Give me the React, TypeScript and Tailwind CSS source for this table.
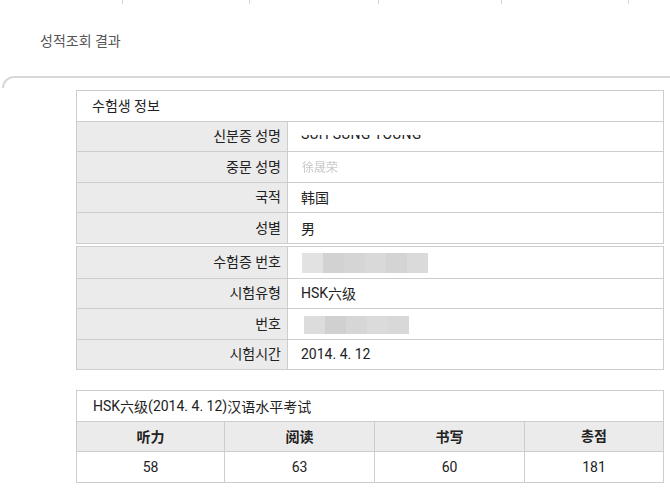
import React from "react";

const font = { fontFamily: "Roboto, 'Noto Sans CJK KR', sans-serif" };
const sc = { fontFamily: "'Noto Sans CJK SC', sans-serif" };

function Mosaic({ shades, h }: { shades: string[]; h: string }) {
  return (
    <div className={`flex ${h}`}>
      {shades.map((c, i) => (
        <div key={i} className="w-[21px]" style={{ background: c }} />
      ))}
    </div>
  );
}

function Row({
  label,
  h,
  children,
}: {
  label: string;
  h: string;
  children?: React.ReactNode;
}) {
  return (
    <div className={`flex border-b border-[#cdcdcd] ${h}`}>
      <div className="w-[211px] shrink-0 bg-[#ebebeb] border-r border-[#cdcdcd] flex items-center justify-end pr-[6px] text-[14px] text-[#222]">
        {label}
      </div>
      <div className="flex-1 flex items-center pl-[13px] text-[14px] text-[#222]">
        {children}
      </div>
    </div>
  );
}

export default function App() {
  return (
    <div className="w-[670px] h-[496px] bg-white overflow-hidden" style={font}>
      {/* tab bar bottom ticks */}
      <div className="flex h-[4px]">
        <div className="ml-[122px] w-px bg-[#d6d6d6]" />
        <div className="ml-[126px] w-px bg-[#d6d6d6]" />
        <div className="ml-[128px] w-px bg-[#d6d6d6]" />
        <div className="ml-[122px] w-px bg-[#d6d6d6]" />
        <div className="ml-[126px] w-px bg-[#d6d6d6]" />
      </div>

      <div className="pl-[40px] pt-[27px] h-[72px] text-[14px] text-[#555]">
        성적조회 결과
      </div>

      <div className="ml-[2px] h-[12px] border-t-2 border-l-2 border-[#d8d8d8] rounded-tl-[12px] border-b-0 border-r-0" />

      <div className="pl-[76px] pt-[2px]">
        <div className="w-[588px] border border-[#cdcdcd] border-b-0">
          <div className="h-[31px] border-b border-[#cdcdcd] flex items-center pl-[15px] text-[14px] text-[#222]">
            수험생 정보
          </div>
          <Row label="신분증 성명" h="h-[30px]">
            <div className="h-[7px] overflow-hidden mt-[3px]">
              <div className="-mt-[8px] text-[14px] leading-[15px] tracking-[0.2px]">
                SUH SUNG YOUNG
              </div>
            </div>
          </Row>
          <Row label="중문 성명" h="h-[31px]">
            <span className="text-[12px] text-[#c8c8c8] blur-[0.7px] ml-[1px]" style={sc}>
              徐晟荣
            </span>
          </Row>
          <Row label="국적" h="h-[30px]">
            <span style={sc}>韩国</span>
          </Row>
          <Row label="성별" h="h-[31px]">
            <span style={sc}>男</span>
          </Row>
        </div>

        <div className="w-[588px] border border-[#cdcdcd] border-b-0 mt-[2px]">
          <Row label="수험증 번호" h="h-[32px]">
            <Mosaic
              h="h-[20px] ml-[1px] mt-[1px]"
              shades={["#e2e2e2", "#d2d2d2", "#d5d5d5", "#d9d9d9", "#d4d4d4", "#dadada"]}
            />
          </Row>
          <Row label="시험유형" h="h-[30px]">
            HSK<span style={sc}>六级</span>
          </Row>
          <Row label="번호" h="h-[31px]">
            <Mosaic
              h="h-[18px] ml-[3px] mt-[2px]"
              shades={["#dcdcdc", "#d0d0d0", "#d6d6d6", "#dbdbdb", "#d8d8d8"]}
            />
          </Row>
          <Row label="시험시간" h="h-[30px]">
            2014. 4. 12
          </Row>
        </div>

        <div className="w-[588px] border border-[#cdcdcd] border-b-0 mt-[20px]">
          <div className="h-[31px] border-b border-[#cdcdcd] flex items-center pl-[16px] text-[14px] text-[#222]">
            HSK<span style={sc}>六级</span>(2014. 4. 12)
            <span style={sc}>汉语水平考试</span>
          </div>
          <div className="flex h-[30px] border-b border-[#cdcdcd] bg-[#ebebeb] text-[14px] font-bold text-[#222]">
            <div className="w-[148px] border-r border-[#cdcdcd] flex items-center justify-center" style={sc}>听力</div>
            <div className="w-[150px] border-r border-[#cdcdcd] flex items-center justify-center" style={sc}>阅读</div>
            <div className="w-[150px] border-r border-[#cdcdcd] flex items-center justify-center" style={sc}>书写</div>
            <div className="flex-1 flex items-center justify-center">총점</div>
          </div>
          <div className="flex h-[31px] border-b border-[#cdcdcd] text-[14px] text-[#222]">
            <div className="w-[148px] border-r border-[#cdcdcd] flex items-center justify-center">58</div>
            <div className="w-[150px] border-r border-[#cdcdcd] flex items-center justify-center">63</div>
            <div className="w-[150px] border-r border-[#cdcdcd] flex items-center justify-center">60</div>
            <div className="flex-1 flex items-center justify-center">181</div>
          </div>
        </div>
      </div>
    </div>
  );
}
